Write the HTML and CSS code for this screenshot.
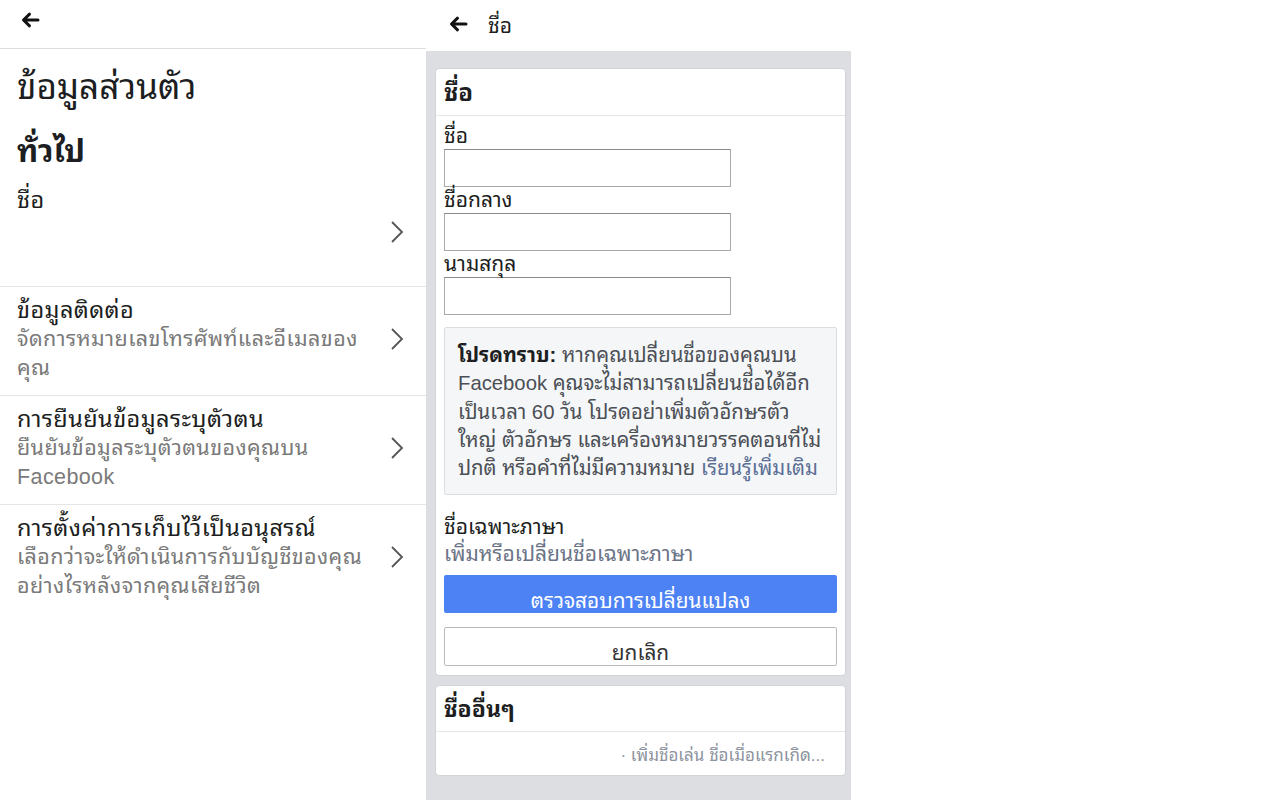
FILE: index.html
```html
<!DOCTYPE html>
<html lang="th">
<head>
<meta charset="utf-8">
<title>ข้อมูลส่วนตัว</title>
<link rel="stylesheet" href="styles.css">
</head>
<body>
<div class="page">
  <section class="left">
    <header class="left-head">
      <svg class="back" width="20" height="16" viewBox="0 0 20 16"><path d="M18 8H4M9.5 2.2L3.5 8l6 5.8" fill="none" stroke="#111" stroke-width="3" stroke-linecap="round" stroke-linejoin="round"/></svg>
    </header>
    <h1 class="page-title">ข้อมูลส่วนตัว</h1>
    <h2 class="section-title">ทั่วไป</h2>
    <div class="row row-name">
      <div class="row-text">
        <div class="row-title">ชื่อ</div>
      </div>
      <svg class="chev" width="14" height="24" viewBox="0 0 14 24"><path d="M2 2l10 10L2 22" fill="none" stroke="#555" stroke-width="1.8"/></svg>
    </div>
    <div class="row">
      <div class="row-text">
        <div class="row-title">ข้อมูลติดต่อ</div>
        <div class="row-sub">จัดการหมายเลขโทรศัพท์และอีเมลของ<br>คุณ</div>
      </div>
      <svg class="chev" width="14" height="24" viewBox="0 0 14 24"><path d="M2 2l10 10L2 22" fill="none" stroke="#555" stroke-width="1.8"/></svg>
    </div>
    <div class="row">
      <div class="row-text">
        <div class="row-title">การยืนยันข้อมูลระบุตัวตน</div>
        <div class="row-sub">ยืนยันข้อมูลระบุตัวตนของคุณบน<br>Facebook</div>
      </div>
      <svg class="chev" width="14" height="24" viewBox="0 0 14 24"><path d="M2 2l10 10L2 22" fill="none" stroke="#555" stroke-width="1.8"/></svg>
    </div>
    <div class="row row-last">
      <div class="row-text">
        <div class="row-title">การตั้งค่าการเก็บไว้เป็นอนุสรณ์</div>
        <div class="row-sub">เลือกว่าจะให้ดำเนินการกับบัญชีของคุณ<br>อย่างไรหลังจากคุณเสียชีวิต</div>
      </div>
      <svg class="chev" width="14" height="24" viewBox="0 0 14 24"><path d="M2 2l10 10L2 22" fill="none" stroke="#555" stroke-width="1.8"/></svg>
    </div>
  </section>

  <section class="right">
    <header class="right-head">
      <svg class="back" width="20" height="16" viewBox="0 0 20 16"><path d="M18 8H4M9.5 2.2L3.5 8l6 5.8" fill="none" stroke="#111" stroke-width="3" stroke-linecap="round" stroke-linejoin="round"/></svg>
      <span class="right-title">ชื่อ</span>
    </header>
    <div class="gray">
      <div class="card">
        <div class="card-head">ชื่อ</div>
        <div class="card-body">
          <label class="field-label">ชื่อ</label>
          <div class="input"></div>
          <label class="field-label">ชื่อกลาง</label>
          <div class="input"></div>
          <label class="field-label">นามสกุล</label>
          <div class="input"></div>
          <div class="note"><b>โปรดทราบ:</b> หากคุณเปลี่ยนชื่อของคุณบน<br>Facebook คุณจะไม่สามารถเปลี่ยนชื่อได้อีก<br>เป็นเวลา 60 วัน โปรดอย่าเพิ่มตัวอักษรตัว<br>ใหญ่ ตัวอักษร และเครื่องหมายวรรคตอนที่ไม่<br>ปกติ หรือคำที่ไม่มีความหมาย <span class="link">เรียนรู้เพิ่มเติม</span></div>
          <div class="lang-title">ชื่อเฉพาะภาษา</div>
          <div class="lang-link">เพิ่มหรือเปลี่ยนชื่อเฉพาะภาษา</div>
          <div class="btn btn-primary">ตรวจสอบการเปลี่ยนแปลง</div>
          <div class="btn btn-cancel">ยกเลิก</div>
        </div>
      </div>
      <div class="card card-other">
        <div class="card-head">ชื่ออื่นๆ</div>
        <div class="other-body">· เพิ่มชื่อเล่น ชื่อเมื่อแรกเกิด...</div>
      </div>
    </div>
  </section>
</div>
</body>
</html>
```

FILE: styles.css
```css
* { box-sizing: border-box; }
html, body { margin: 0; padding: 0; background: #fff; }
body {
  font-family: "Liberation Sans", "Noto Sans Thai Looped", "Loma", "Garuda", "Noto Sans Thai", "Noto Sans", sans-serif;
  color: #1c1e21;
}
.page { display: flex; width: 1280px; height: 800px; }

/* left panel */
.left { width: 426px; background: #fff; }
.left-head {
  height: 49px;
  border-bottom: 1px solid #dedede;
  padding: 12px 0 0 20px;
}
.back { display: block; }
.page-title {
  margin: 16px 0 0 17px;
  font-size: 35px;
  line-height: 44px;
  font-weight: normal;
}
.section-title {
  margin: 23px 0 0 17px;
  font-size: 31px;
  line-height: 40px;
  font-weight: bold;
}
.row {
  display: flex;
  align-items: center;
  justify-content: space-between;
  padding: 8px 22px 12px 17px;
  border-bottom: 1px solid #e6e6e6;
}
.row-name { align-items: flex-start; height: 115px; padding-top: 13px; }
.row-name .chev { margin-top: 35px; }
.row-last { border-bottom: none; }
.row-title { font-size: 23.5px; line-height: 30px; letter-spacing: 0.4px; }
.row-sub { font-size: 21.5px; line-height: 29px; color: #7a7a7a; white-space: nowrap; letter-spacing: 0.4px; }
.chev { flex: none; }

/* right panel */
.right { width: 425px; display: flex; flex-direction: column; }
.right-head {
  height: 51px;
  display: flex;
  align-items: center;
  padding: 0 0 4px 22px;
  gap: 20px;
  background: #fff;
}
.right-title { font-size: 21px; }
.gray {
  flex: 1;
  background: #dcdee2;
  padding: 17px 5px 0 9px;
}
.card {
  background: #fff;
  border: 1px solid #d2d4d8;
  border-radius: 4px;
}
.card-head {
  height: 47px;
  padding: 0 8px 5px 8px;
  display: flex;
  align-items: center;
  font-size: 24px;
  font-weight: bold;
  border-bottom: 1px solid #e5e6e9;
}
.card-body { padding: 7px 8px 9px 8px; }
.field-label { display: block; font-size: 21px; line-height: 26px; }
.input {
  width: 287px;
  height: 38px;
  border: 1px solid #a9a9a9;
  border-top-color: #8a8a8a;
  background: #fff;
}
.note {
  margin-top: 12px;
  background: #f5f6f7;
  border: 1px solid #dadde1;
  border-radius: 2px;
  padding: 13px 8px 12px 13px;
  font-size: 20.3px;
  line-height: 28.3px;
  color: #4b4f56;
  white-space: nowrap;
}
.note b { color: #1c1e21; }
.link { color: #5b6f96; }
.lang-title { margin-top: 18px; font-size: 21px; line-height: 27px; }
.lang-link { font-size: 21px; line-height: 27px; color: #6b7487; }
.btn {
  height: 38px;
  display: flex;
  align-items: center;
  justify-content: center;
  font-size: 20.8px;
  border-radius: 2px;
  padding-top: 8px;
}
.btn-primary { margin-top: 8px; background: #4c82f4; color: #fff; }
.btn-cancel {
  margin-top: 14px;
  height: 39px;
  border: 1px solid #b9bbbf;
  color: #333;
  background: #fff;
}
.card-other { margin-top: 9px; }
.card-other .card-head { height: 46px; font-size: 23px; }
.other-body {
  height: 43px;
  display: flex;
  align-items: center;
  justify-content: flex-end;
  padding: 0 20px 0 0;
  font-size: 17px;
  color: #8d949e;
}
```
